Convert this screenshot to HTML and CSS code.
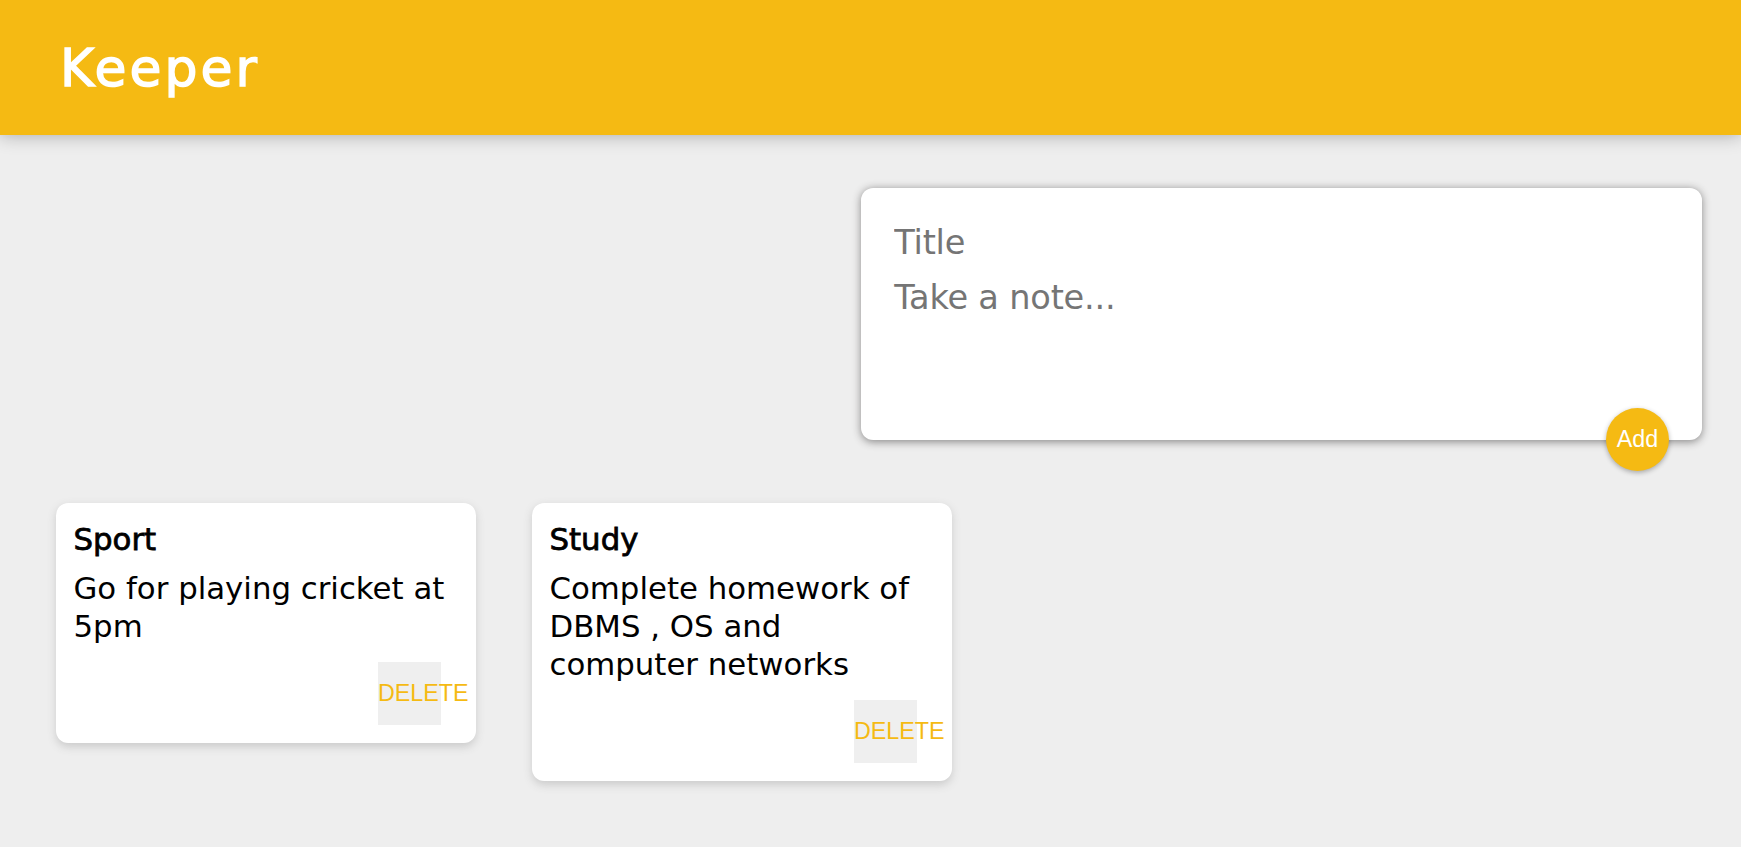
FILE: index.html
```html
<!DOCTYPE html>
<html lang="en">
<head>
<meta charset="utf-8">
<title>Keeper</title>
<link rel="stylesheet" href="styles.css">
</head>
<body>
  <header class="app-header">
    <h1 class="app-title">Keeper</h1>
  </header>
  <div class="create-row">
    <form class="create-note">
      <input class="field" name="title" placeholder="Title">
      <textarea class="field" name="content" rows="3" placeholder="Take a note..."></textarea>
      <button type="button" class="add-btn">Add</button>
    </form>
  </div>
  <div class="notes">
    <div class="note">
      <h1 class="note-title">Sport</h1>
      <p class="note-text">Go for playing cricket at 5pm</p>
      <button type="button" class="delete-btn">DELETE</button>
    </div>
    <div class="note">
      <h1 class="note-title">Study</h1>
      <p class="note-text">Complete homework of DBMS , OS and computer networks</p>
      <button type="button" class="delete-btn">DELETE</button>
    </div>
  </div>
</body>
</html>
```
FILE: styles.css
```css
* {
  margin: 0;
  padding: 0;
  box-sizing: border-box;
}

html {
  font-family: "DejaVu Sans", sans-serif;
  font-size: 28px;
}

body {
  background: #eeeeee;
  padding: 0 28px;
  min-height: 847px;
}

.app-header {
  background-color: #f5ba13;
  margin: 0 -28px;
  padding: 29px 60px 0;
  height: 135px;
  box-shadow: 0 0 17.5px 0 rgba(0, 0, 0, 0.3);
}

.app-title {
  color: #ffffff;
  font-family: "DejaVu Sans", sans-serif;
  font-weight: 400;
  font-size: 52px;
  line-height: 79px;
  letter-spacing: 3px;
  -webkit-text-stroke: 1.4px #ffffff;
}

.create-row {
  display: flex;
  justify-content: flex-end;
  padding-right: 11px;
}

.create-note {
  position: relative;
  width: 841px;
  margin: 53px 0 35px 0;
  background: #ffffff;
  padding: 27px 26.25px 25.5px;
  border-radius: 12.25px;
  box-shadow: 0 1.75px 8.75px rgb(138, 137, 137);
}

.field {
  width: 100%;
  border: none;
  padding: 7px;
  outline: none;
  font-family: inherit;
  font-size: 33.6px;
  line-height: 41px;
  letter-spacing: -0.2px;
  resize: none;
  color: #333;
  background: #fff;
}

.field::placeholder {
  color: #757575;
}

.add-btn {
  position: absolute;
  right: 33px;
  bottom: -31.5px;
  width: 63px;
  height: 63px;
  border: none;
  border-radius: 50%;
  background: #f5ba13;
  color: #ffffff;
  font-family: "Liberation Sans", Arial, sans-serif;
  font-size: 23.3px;
  box-shadow: 0 1.75px 5.25px rgba(0, 0, 0, 0.3);
  cursor: pointer;
}

.notes {
  display: flex;
  flex-wrap: wrap;
  align-items: flex-start;
}

.note {
  background: #ffffff;
  border-radius: 12.25px;
  box-shadow: 0 3.5px 8.75px #cccccc;
  padding: 17.5px;
  width: 420px;
  margin: 28px;
}

.note-title {
  font-size: 30.8px;
  font-weight: 400;
  line-height: 38px;
  margin-bottom: 10.5px;
  color: #000;
  -webkit-text-stroke: 0.8px #000;
}

.note-text {
  font-size: 30.8px;
  line-height: 38px;
  margin-bottom: 17.5px;
  white-space: pre-wrap;
  word-wrap: break-word;
  color: #000;
}

.delete-btn {
  float: right;
  margin-right: 17.5px;
  width: 63px;
  height: 63px;
  padding: 0;
  border: none;
  background: #efefef;
  color: #f5ba13;
  font-family: "Liberation Sans", Arial, sans-serif;
  font-size: 23.3px;
  line-height: 63px;
  text-align: left;
  white-space: nowrap;
  overflow: visible;
  cursor: pointer;
}
```
